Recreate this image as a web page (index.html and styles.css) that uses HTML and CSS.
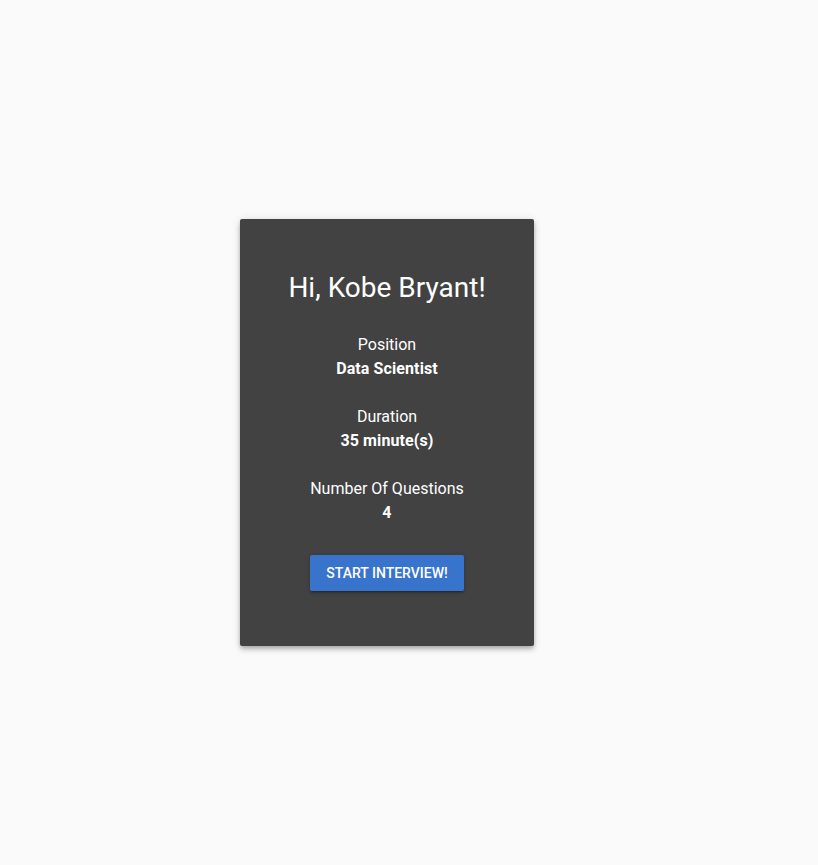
FILE: index.html
```html
<!DOCTYPE html>
<html>
<head>
<meta charset="utf-8">
<link rel="stylesheet" href="styles.css">
</head>
<body>
<main class="page">
  <section class="card">
    <h1 class="title">Hi, Kobe Bryant!</h1>
    <div class="field">
      <div class="label">Position</div>
      <div class="value">Data Scientist</div>
    </div>
    <div class="field">
      <div class="label">Duration</div>
      <div class="value">35 minute(s)</div>
    </div>
    <div class="field">
      <div class="label">Number Of Questions</div>
      <div class="value">4</div>
    </div>
    <button class="start">Start Interview!</button>
  </section>
</main>
</body>
</html>
```
FILE: styles.css
```css
html, body {
  margin: 0;
  padding: 0;
  background: #fafafa;
  font-family: Roboto, "Noto Sans", sans-serif;
}
.page {
  height: 865px;
  display: flex;
  align-items: center;
  justify-content: center;
  padding-right: 44px;
  box-sizing: border-box;
}
.card {
  width: 294px;
  height: 427px;
  box-sizing: border-box;
  background: #424242;
  border-radius: 2px;
  box-shadow: 0 2px 4px -1px rgba(0,0,0,.2), 0 4px 5px 0 rgba(0,0,0,.14), 0 1px 10px 0 rgba(0,0,0,.12);
  color: #fff;
  display: flex;
  flex-direction: column;
  align-items: center;
  padding-top: 51px;
}
.title {
  margin: 0 0 27px;
  font-size: 28px;
  font-weight: 400;
  line-height: 36px;
}
.field {
  text-align: center;
  font-size: 16px;
  line-height: 24px;
  margin-bottom: 24px;
}
.field:last-of-type {
  margin-bottom: 30px;
}
.value {
  font-weight: 700;
  letter-spacing: 0.1px;
}
.start {
  height: 36px;
  width: 154px;
  border: none;
  border-radius: 2px;
  background: #3874cb;
  color: #fff;
  font-family: Roboto, sans-serif;
  font-size: 14px;
  font-weight: 500;
  text-transform: uppercase;
  letter-spacing: 0;
  box-shadow: 0 3px 1px -2px rgba(0,0,0,.2), 0 2px 2px 0 rgba(0,0,0,.14), 0 1px 5px 0 rgba(0,0,0,.12);
  cursor: pointer;
  padding: 0 16px;
}
```
